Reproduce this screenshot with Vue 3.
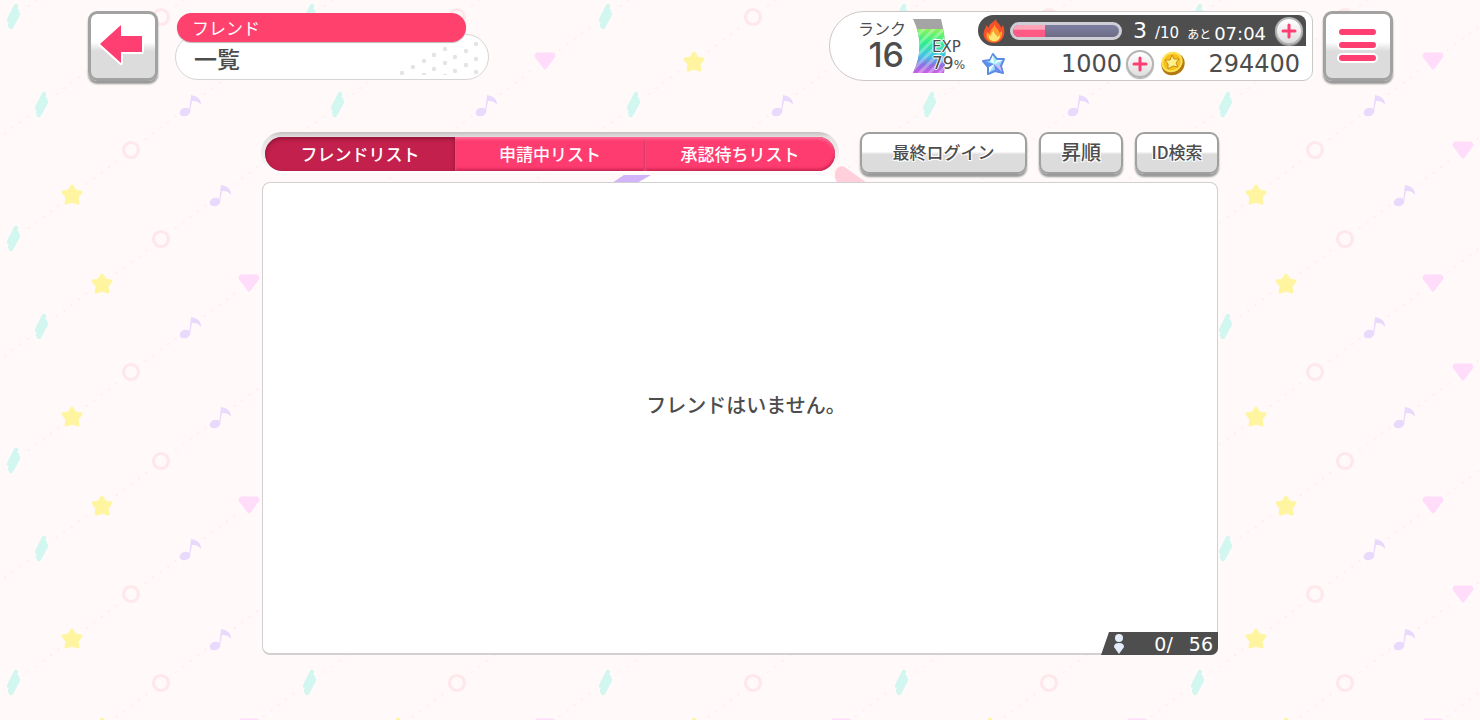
<template>
  <div class="screen">
    <!-- 背景パターン -->
    <svg class="backdrop" aria-hidden="true">
      <defs>
        <pattern id="pop" width="296" height="222" patternUnits="userSpaceOnUse">
          <circle v-for="(d, i) in dots" :key="'d' + i" :cx="d.x" :cy="d.y" r="1.2" fill="#fcf0f2" />
          <g v-for="(m, i) in motifs" :key="i" :transform="`translate(${m.x} ${m.y})`">
            <path v-if="m.type === 'bolt'" d="M3 -11 L-4 3 M4 -6 L-3 8 M5 -3 L-2 10" transform="translate(-1 0)" fill="none" stroke="#d2f6f0" stroke-width="4.5" stroke-linecap="round" />
            <path v-else-if="m.type === 'star'" d="M0 -9 L3 -4 L9 -3 L5 2 L6 8 L0 6 L-6 8 L-5 2 L-9 -3 L-3 -4Z" fill="#fff5a0" stroke="#fff5a0" stroke-width="3" stroke-linejoin="round" />
            <circle v-else-if="m.type === 'ring'" r="7.5" fill="none" stroke="#ffe8ec" stroke-width="3.2" />
            <g v-else-if="m.type === 'note'" fill="#e8dafc">
              <ellipse cx="-5" cy="7" rx="5.5" ry="4.2" transform="rotate(-18 -5 7)" />
              <path d="M-1 7 L1 -10 C5 -9 11 -8 11 0 C8 -4 5 -4 2 -4 L0 7Z" />
            </g>
            <path v-else d="M-8 -7 L8 -7 L9 -5 L0 7 L-9 -5Z" fill="#ffdcfa" stroke="#ffdcfa" stroke-width="3" stroke-linejoin="round" />
          </g>
        </pattern>
      </defs>
      <rect width="100%" height="100%" fill="url(#pop)" />
    </svg>

    <!-- ヘッダー -->
    <header class="topbar">
      <button class="square-btn" type="button" aria-label="戻る">
        <svg width="54" height="50" viewBox="0 0 54 50">
          <path d="M4 23 L25 4 L25 15 L46 15 L46 31 L25 31 L25 42Z" fill="#ff3e72" stroke="#fff" stroke-width="4" stroke-linejoin="round" paint-order="stroke" />
        </svg>
      </button>

      <div class="heading">
        <p class="heading-category">フレンド</p>
        <div class="heading-page">
          <h1>一覧</h1>
          <svg width="90" height="36" viewBox="0 0 90 36" fill="#e4e4e4" aria-hidden="true">
            <circle v-for="(p, i) in halftone" :key="i" :cx="p[0]" :cy="p[1]" r="2.2" />
          </svg>
        </div>
      </div>

      <div class="status">
        <div class="rank">
          <span class="rank-label">ランク</span>
          <strong class="rank-value">{{ player.rank }}</strong>
        </div>
        <div class="exp">
          <svg width="34" height="56" viewBox="0 0 34 56" aria-hidden="true">
            <defs>
              <linearGradient id="rainbow" x1="0" y1="0" x2="0" y2="1">
                <stop offset="0" stop-color="#8df25c" />
                <stop offset="0.3" stop-color="#2df08a" />
                <stop offset="0.6" stop-color="#42c4e8" />
                <stop offset="0.8" stop-color="#8b72e0" />
                <stop offset="1" stop-color="#d45be6" />
              </linearGradient>
              <pattern id="slant" width="7" height="7" patternUnits="userSpaceOnUse" patternTransform="rotate(45)">
                <rect width="3" height="7" fill="#fff" opacity="0.3" />
              </pattern>
              <clipPath id="ribbon">
                <path d="M0 1 L28 1 Q35 28 31 55 L0 55 Q13 28 0 1Z" />
              </clipPath>
            </defs>
            <g clip-path="url(#ribbon)">
              <rect width="34" height="56" fill="#a4a4a4" />
              <rect y="11" width="34" height="45" fill="url(#rainbow)" />
              <rect y="11" width="34" height="45" fill="url(#slant)" />
            </g>
          </svg>
          <div class="exp-text">
            <span class="exp-label">EXP</span>
            <span class="exp-value">{{ player.exp }}<small>%</small></span>
          </div>
        </div>

        <div class="wallet">
          <div class="boost">
            <svg width="24" height="26" viewBox="0 0 24 26" aria-hidden="true">
              <path d="M14 1 C14 5 19 6 19 10 L21 7 C25 17 20 25 12 25 C4 25 0 19 2 13 C3 10 4 10 4 7 L7 10 C6 6 11 5 14 1Z" fill="#f4502a" />
              <path d="M13 6 C12 10 18 11 17 15 L20 13 C21 19 17 24 12 24 C6 24 3 19 5 14 L8 16 C8 11 12 10 13 6Z" fill="#ff9a2e" />
              <path d="M12 12 C11 16 15 16 15 19 L18 17 C18 21 15 23 12 23 C9 23 6 21 7 17 L9 18 C9 15 11 14 12 12Z" fill="#ffe672" />
            </svg>
            <div class="boost-meter"><div class="boost-fill" :style="{ width: boostPercent + '%' }"></div></div>
            <span class="boost-now">{{ player.boost }}</span>
            <span class="boost-max">/{{ player.boostMax }}</span>
            <span class="boost-wait">あと</span>
            <span class="boost-time">07:04</span>
            <button class="plus-btn" type="button" aria-label="ブーストを回復">
              <svg width="16" height="16" viewBox="0 0 16 16"><path d="M8 2V14M2 8H14" stroke="#ff3e72" stroke-width="3" stroke-linecap="round" /></svg>
            </button>
          </div>
          <div class="money">
            <svg width="26" height="26" viewBox="0 0 26 26" aria-hidden="true">
              <defs>
                <linearGradient id="gem" x1="0" y1="0" x2="1" y2="1">
                  <stop offset="0" stop-color="#6fd8ff" />
                  <stop offset="0.5" stop-color="#a8f0f4" />
                  <stop offset="1" stop-color="#8f8cf4" />
                </linearGradient>
              </defs>
              <path d="M12 3 L16 8 L23 8 L20 15 L22 22 L14 20 L7 23 L7 16 L2 10 L9 9Z" fill="url(#gem)" stroke="#5c8ae4" stroke-width="2" stroke-linejoin="round" />
              <path d="M12 4 L13 13 L9 10Z M22 9 L13 13 L16 9Z M8 22 L13 13 L8 16Z" fill="#efffff" />
              <path d="M3 10 L13 13 L8 16Z M21 21 L13 13 L14 19Z" fill="#5f8df0" />
              <path d="M13 13 L19 15 L21 21Z" fill="#d3b8fa" />
            </svg>
            <span class="gems">{{ player.gems }}</span>
            <button class="plus-btn" type="button" aria-label="スターを購入">
              <svg width="16" height="16" viewBox="0 0 16 16"><path d="M8 2V14M2 8H14" stroke="#ff3e72" stroke-width="3" stroke-linecap="round" /></svg>
            </button>
            <svg class="coin-icon" width="26" height="26" viewBox="0 0 26 26" aria-hidden="true">
              <ellipse cx="13" cy="13" rx="12" ry="11" transform="rotate(-35 13 13)" fill="#b47a12" />
              <ellipse cx="12" cy="11" rx="11" ry="10" transform="rotate(-35 12 11)" fill="#ffe154" />
              <ellipse cx="12" cy="11" rx="9" ry="8" transform="rotate(-35 12 11)" fill="#f7bf1c" />
              <path d="M12 4 L14 8 L19 8 L16 12 L18 16 L13 15 L8 18 L8 13 L5 9 L10 9Z" fill="#fff08c" stroke="#c98d14" stroke-linejoin="round" />
            </svg>
            <span class="coins">{{ player.coins }}</span>
          </div>
        </div>
      </div>

      <button class="square-btn" type="button" aria-label="メニュー">
        <svg width="46" height="44" viewBox="0 0 46 44" stroke-linecap="round">
          <path d="M7 8H38M7 21H38M7 34H38" stroke="#fff" stroke-width="10" />
          <path d="M7 8H38M7 21H38M7 34H38" stroke="#ff3e72" stroke-width="6" />
        </svg>
      </button>
    </header>

    <!-- フレンド一覧 -->
    <main class="content">
      <div class="toolbar">
        <nav class="tabs">
          <button
            v-for="tab in tabs"
            :key="tab"
            type="button"
            class="tab"
            :class="{ active: tab === currentTab }"
            @click="currentTab = tab"
          >{{ tab }}</button>
        </nav>
        <button class="tool-btn sort-btn" type="button">最終ログイン</button>
        <button class="tool-btn order-btn" type="button" @click="ascending = !ascending">{{ ascending ? '昇順' : '降順' }}</button>
        <button class="tool-btn search-btn" type="button">ID検索</button>
      </div>

      <section class="panel">
        <svg class="panel-deco" width="260" height="16" viewBox="0 0 260 16" aria-hidden="true">
          <path d="M38 1 H218 L240 16 H10Z" fill="#fff" />
          <path d="M0 9 L12 1 H39 L25 9Z" fill="#d2b4fa" />
          <path d="M225 9 Q220 -3 227 -7 Q230 -9 234 -6 L255 9Z" fill="#ffcfdc" />
        </svg>
        <div class="panel-box">
          <p class="empty">フレンドはいません。</p>
          <div class="counter">
            <svg width="12" height="20" viewBox="0 0 12 20" fill="#e6edfa" aria-hidden="true">
              <circle cx="6" cy="4" r="4" />
              <path d="M6 20 L1 13 Q1 9 6 9 Q11 9 11 13Z" />
            </svg>
            <span class="counter-now">0/</span>
            <span class="counter-max">56</span>
          </div>
        </div>
      </section>
    </main>
  </div>
</template>

<script setup>
import { computed, ref } from 'vue'

const player = {
  rank: 16,
  exp: 79,
  boost: 3,
  boostMax: 10,
  gems: 1000,
  coins: 294400
}

const boostPercent = computed(() => player.boost / player.boostMax * 100)

const tabs = ['フレンドリスト', '申請中リスト', '承認待ちリスト']
const currentTab = ref(tabs[0])
const ascending = ref(true)

// 背景のモチーフ（斜めの2列を繰り返す）
const motifs = [
  { type: 'bolt', x: 14, y: 17 },
  { type: 'star', x: 72, y: 195 },
  { type: 'ring', x: 131, y: 150 },
  { type: 'note', x: 190, y: 105 },
  { type: 'heart', x: 249, y: 61 },
  { type: 'bolt', x: 42, y: 105 },
  { type: 'star', x: 102, y: 62 },
  { type: 'ring', x: 161, y: 17 },
  { type: 'note', x: 220, y: 195 },
  { type: 'heart', x: 279, y: 150 }
]

// モチーフの間をつなぐ点線
const dots = motifs.flatMap(m => [2, 3, 4, 5, 6].map(k => ({
  x: (m.x + k * 7.4) % 296,
  y: (m.y - k * 5.55 + 222) % 222
})))

const halftone = [
  [4, 34], [15, 28], [26, 22], [26, 36], [36, 16], [36, 30],
  [47, 10], [47, 24], [47, 37], [57, 18], [57, 32], [68, 12],
  [68, 26], [78, 5], [78, 20], [78, 33]
]
</script>

<style>
body {
  background: #fff9f9;
}
</style>

<style scoped>
.screen {
  position: relative;
  min-height: 100vh;
  box-sizing: border-box;
  display: flex;
  flex-direction: column;
  overflow: hidden;
  color: #4d4d4d;
  font-family: "Noto Sans CJK JP", sans-serif;
}

button {
  font-family: inherit;
  color: inherit;
  cursor: pointer;
}

svg {
  display: block;
  flex: none;
}

.backdrop {
  position: absolute;
  inset: 0;
  width: 100%;
  height: 100%;
}

/* ヘッダー */
.topbar {
  position: relative;
  display: flex;
  align-items: flex-start;
  padding: 11px 87px 0 88px;
}

.square-btn {
  flex: none;
  width: 70px;
  height: 70px;
  box-sizing: border-box;
  padding: 0;
  display: flex;
  align-items: center;
  justify-content: center;
  border: 3px solid #a2a2a2;
  border-radius: 9px;
  background: linear-gradient(#fff 44%, #dcdcdc 58%);
  box-shadow: 0 3px 2px #999;
}

.heading {
  width: 314px;
  margin-left: 17px;
  padding-top: 2px;
}

.heading-category {
  position: relative;
  width: 289px;
  height: 29px;
  box-sizing: border-box;
  margin: 0 0 0 2px;
  padding-left: 15px;
  border-radius: 15px;
  background: #ff416e;
  box-shadow: 0 1px 1px #bbb;
  color: #fff;
  font-size: 17px;
  line-height: 29px;
}

.heading-page {
  display: flex;
  align-items: flex-end;
  justify-content: space-between;
  height: 46px;
  box-sizing: border-box;
  margin-top: -8px;
  padding: 0 0 4px 18px;
  border: 1px solid #d8d4d4;
  border-radius: 23px;
  background: #fff;
}

.heading-page h1 {
  margin: 0;
  font-size: 23px;
  font-weight: 500;
  line-height: 34px;
}

/* ステータス */
.status {
  display: flex;
  height: 70px;
  box-sizing: border-box;
  margin-left: auto;
  margin-right: 10px;
  padding: 3px 6px 3px 28px;
  border: 1px solid #ccc8c8;
  border-radius: 35px 10px 10px 35px;
  background: #fff;
}

.rank {
  width: 48px;
  display: flex;
  flex-direction: column;
  align-items: flex-end;
}

.rank-label {
  font-size: 16px;
  line-height: 26px;
}

.rank-value {
  padding-right: 2px;
  font-family: Inter, sans-serif;
  font-size: 34px;
  font-weight: 500;
  line-height: 28px;
}

.exp {
  position: relative;
  width: 58px;
  padding: 3px 0 0 7px;
}

.exp-text {
  position: absolute;
  left: 26px;
  top: 24px;
  display: flex;
  flex-direction: column;
  font-family: "DejaVu Sans", sans-serif;
  line-height: 16px;
  text-shadow: 1px 0 #fff, -1px 0 #fff, 0 1px #fff, 0 -1px #fff;
}

.exp-label {
  font-size: 15px;
}

.exp-value {
  font-size: 17px;
}

.exp-value small {
  font-size: 12px;
}

.wallet {
  width: 328px;
  margin-left: 7px;
}

.boost {
  display: flex;
  align-items: center;
  height: 31px;
  box-sizing: border-box;
  padding: 0 3px 0 4px;
  border-radius: 16px 8px 0 16px;
  background: #4e4e4e;
  color: #fff;
  font-family: "DejaVu Sans", sans-serif;
}

.boost-meter {
  width: 112px;
  height: 18px;
  box-sizing: border-box;
  margin-left: 4px;
  border: 3px solid #cfcdd6;
  border-radius: 9px;
  overflow: hidden;
  background: linear-gradient(#7e7ea2, #6d6d86);
}

.boost-fill {
  height: 100%;
  background: linear-gradient(#ffa3b8 35%, #ff5a86 45%);
}

.boost-now {
  width: 25px;
  text-align: right;
  font-size: 22px;
}

.boost-max {
  margin-left: 8px;
  font-size: 15px;
  padding-top: 5px;
}

.boost-wait {
  margin-left: 8px;
  padding-top: 5px;
  font-family: "Noto Sans CJK JP", sans-serif;
  font-size: 12px;
}

.boost-time {
  margin-left: 3px;
  padding-top: 5px;
  font-size: 18px;
}

.plus-btn {
  flex: none;
  width: 28px;
  height: 28px;
  padding: 0;
  display: flex;
  align-items: center;
  justify-content: center;
  border: 2px solid #b4b4b4;
  border-radius: 50%;
  background: linear-gradient(#fff, #dedede);
  box-shadow: 0 1px 1px #aaa;
}

.boost .plus-btn {
  margin-left: auto;
}

.money {
  display: flex;
  align-items: center;
  height: 33px;
  padding: 1px 6px 0 3px;
  font-family: "DejaVu Sans", sans-serif;
  font-size: 24px;
}

.gems {
  flex: 1;
  padding-right: 4px;
  text-align: right;
}

.coin-icon {
  margin-left: 6px;
}

.coins {
  width: 114px;
  text-align: right;
}

/* 一覧 */
.content {
  position: relative;
  flex: 1;
  display: flex;
  flex-direction: column;
  padding: 51px 262px 65px;
}

.toolbar {
  display: flex;
  align-items: flex-start;
  margin: 0 -1px;
}

.tabs {
  flex: 1;
  display: grid;
  grid-template-columns: repeat(3, 1fr);
  margin-right: 21px;
  padding: 5px 4px 2px;
  border-radius: 21px;
  background: linear-gradient(#c4c0c1, #e4e0e1 5px, #fff);
}

.tab {
  height: 34px;
  padding: 0 0 2px;
  border: 0;
  background: #ff3c70;
  box-shadow: inset 0 2px 3px #ff6f98, inset 0 -2px 3px #c8234f, inset -1px 0 1px #c8234f;
  color: #fff;
  font-size: 17px;
  font-weight: 500;
}

.tab.active {
  background: #c3204d;
  box-shadow: inset 0 2px 4px #8d1536;
}

.tab:first-child {
  border-radius: 17px 0 0 17px;
}

.tab:last-child {
  border-radius: 0 17px 17px 0;
}

.tool-btn {
  height: 42px;
  box-sizing: border-box;
  padding: 0 0 4px;
  border: 2px solid #a0a0a0;
  border-radius: 9px;
  background: linear-gradient(#fff 46%, #dcdcdc 54%);
  box-shadow: 0 3px 2px #999;
  font-size: 17px;
  font-weight: 500;
  text-shadow: 1px 1px #fff, -1px -1px #fff, 1px -1px #fff, -1px 1px #fff;
}

.sort-btn {
  width: 167px;
}

.order-btn {
  width: 84px;
  margin-left: 12px;
  font-size: 20px;
}

.search-btn {
  width: 84px;
  margin-left: 12px;
}

.panel {
  position: relative;
  flex: 1;
  display: flex;
  margin-top: 8px;
}

.panel-deco {
  position: absolute;
  left: 350px;
  top: -8px;
  overflow: visible;
}

.panel-box {
  position: relative;
  flex: 1;
  display: flex;
  align-items: center;
  justify-content: center;
  border: 1px solid #d2d0d0;
  border-bottom-width: 2px;
  border-radius: 8px;
  background: #fff;
}

.empty {
  margin: 0;
  padding: 0 0 28px 12px;
  font-size: 20px;
  font-weight: 500;
}

.counter {
  position: absolute;
  right: -1px;
  bottom: -2px;
  width: 117px;
  height: 23px;
  box-sizing: border-box;
  padding: 0 5px 0 12px;
  display: flex;
  align-items: center;
  border-radius: 0 0 7px 0;
  background: #4e4e4e;
  clip-path: polygon(8px 0, 100% 0, 100% 100%, 0 100%);
  color: #fff;
  font-family: "DejaVu Sans", sans-serif;
  font-size: 19px;
}

.counter-now {
  margin-left: auto;
}

.counter-max {
  margin-left: 16px;
}
</style>
